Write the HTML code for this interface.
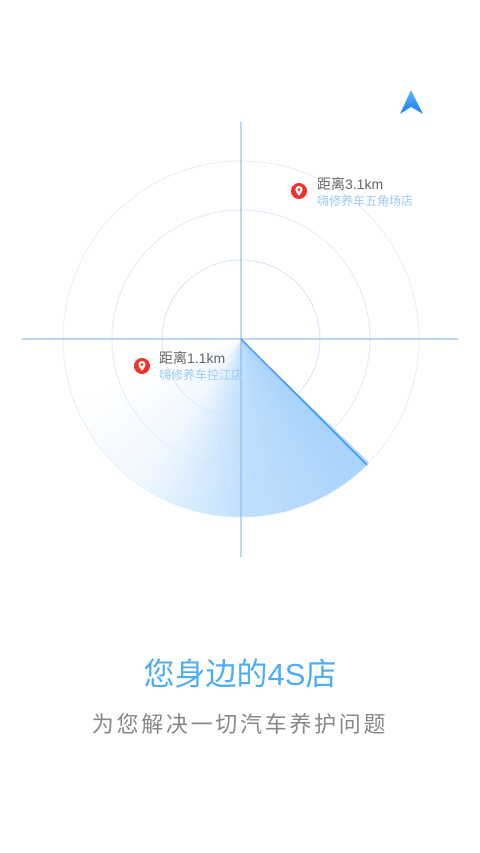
<!DOCTYPE html>
<html><head><meta charset="utf-8"><style>
body{margin:0;width:480px;height:853px;background:#fff;position:relative;overflow:hidden;font-family:"Liberation Sans","Noto Sans CJK SC",sans-serif}
.a{position:absolute}
</style></head><body>
<svg class="a" style="left:0;top:0" width="480" height="600">
<defs>
<linearGradient id="ag" x1="0" y1="0" x2="0" y2="1"><stop offset="0" stop-color="#5fb4ff"/><stop offset="1" stop-color="#1d7de8"/></linearGradient>
</defs>
<path d="M411 90 L423 114 L411 107 L400 114 Z" fill="url(#ag)"/>
<circle cx="241" cy="339" r="79" fill="none" stroke="#d3e5fa" stroke-width="1"/>
<circle cx="241" cy="339" r="129" fill="none" stroke="#dfebfa" stroke-width="1"/>
<circle cx="241" cy="339" r="178" fill="none" stroke="#e8eff8" stroke-width="1"/>
</svg>
<div class="a" style="left:63px;top:161px;width:356px;height:356px;border-radius:50%;background:conic-gradient(from 0deg,rgba(255,255,255,0) 0deg,rgba(255,255,255,0) 134deg,#a7d2fb 134deg,#c2e0fd 180deg,rgba(230,242,255,0.6) 215deg,rgba(255,255,255,0) 250deg,rgba(255,255,255,0) 360deg)"></div>
<svg class="a" style="left:0;top:0" width="480" height="600">
<line x1="241" y1="122" x2="241" y2="557" stroke="#7ab3ec" stroke-width="1"/>
<line x1="22" y1="339" x2="458" y2="339" stroke="#7ab3ec" stroke-width="1"/>
<line x1="241" y1="339" x2="367" y2="465" stroke="#3d95ef" stroke-width="1.5"/>
<g transform="translate(299,191)"><circle r="8" fill="#f0302a"/><path d="M0 5 C-3 1 -3.5 -0.5 -3.5 -1.5 A3.5 3.5 0 0 1 3.5 -1.5 C3.5 -0.5 3 1 0 5Z" fill="#fff"/><circle cy="-1.5" r="1.3" fill="#f0302a"/></g>
<g transform="translate(142,366)"><circle r="8" fill="#f0302a"/><path d="M0 5 C-3 1 -3.5 -0.5 -3.5 -1.5 A3.5 3.5 0 0 1 3.5 -1.5 C3.5 -0.5 3 1 0 5Z" fill="#fff"/><circle cy="-1.5" r="1.3" fill="#f0302a"/></g>
</svg>
<div class="a" style="left:317px;top:174px;font-size:14px;color:#666">距离3.1km</div>
<div class="a" style="left:317px;top:192px;font-size:12px;color:#9ccaf5">嗨修养车五角场店</div>
<div class="a" style="left:159px;top:348px;font-size:14px;color:#666">距离1.1km</div>
<div class="a" style="left:159px;top:366px;font-size:12px;color:#9ccaf5">嗨修养车控江店</div>
<div class="a" style="left:0;width:480px;top:656px;text-align:center;font-size:31px;color:#4fadf5;line-height:38px">您身边的4S店</div>
<div class="a" style="left:0;width:480px;top:711px;text-align:center;font-size:22px;letter-spacing:2.7px;color:#888;line-height:28px">为您解决一切汽车养护问题</div>
</body></html>
